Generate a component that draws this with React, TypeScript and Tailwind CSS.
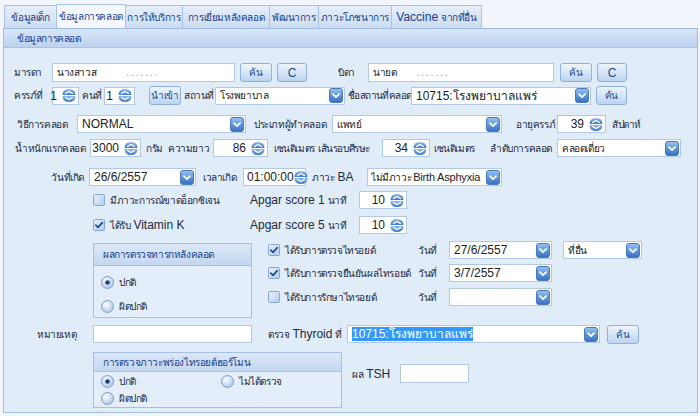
import React from "react";

const FONT = { fontFamily: '"Liberation Sans", "DejaVu Sans", Tahoma, sans-serif' };
const TH = "text-[10px] tracking-[-0.4px]";

function DropIcon() {
  return (
    <svg width="14" height="15" viewBox="0 0 14 15" className="shrink-0">
      <defs>
        <linearGradient id="dg" x1="0" y1="0" x2="0" y2="1">
          <stop offset="0" stopColor="#9cc2f0" />
          <stop offset="0.5" stopColor="#5f97dd" />
          <stop offset="1" stopColor="#356fc0" />
        </linearGradient>
      </defs>
      <rect x="0.5" y="0.5" width="13" height="14" rx="2.5" fill="url(#dg)" stroke="#4a78b8" />
      <path d="M4 6.2 L7 9.2 L10 6.2" fill="none" stroke="#fff" strokeWidth="1.8" strokeLinecap="round" strokeLinejoin="round" />
    </svg>
  );
}

function SpinIcon() {
  return (
    <svg width="14" height="15" viewBox="0 0 14 15" className="shrink-0">
      <defs>
        <linearGradient id="sg" x1="0" y1="0" x2="0" y2="1">
          <stop offset="0" stopColor="#8fb9ec" />
          <stop offset="1" stopColor="#3d78c8" />
        </linearGradient>
      </defs>
      <path d="M0.5 7 Q0.5 1 7 1 Q13.5 1 13.5 7 Z" fill="url(#sg)" />
      <path d="M0.5 8 Q0.5 14 7 14 Q13.5 14 13.5 8 Z" fill="url(#sg)" />
      <path d="M3.5 5.5 L7 3.5 L10.5 5.5" fill="none" stroke="#fff" strokeWidth="1.4" strokeLinecap="round" />
      <path d="M3.5 9.5 L7 11.5 L10.5 9.5" fill="none" stroke="#fff" strokeWidth="1.4" strokeLinecap="round" />
    </svg>
  );
}

function Check({ on }: { on?: boolean }) {
  return (
    <svg width="12" height="12" viewBox="0 0 12 12" className="shrink-0">
      <defs>
        <linearGradient id="cg" x1="0" y1="0" x2="1" y2="1">
          <stop offset="0" stopColor="#eaf2fc" />
          <stop offset="1" stopColor="#b2cbea" />
        </linearGradient>
      </defs>
      <rect x="0.5" y="0.5" width="11" height="11" rx="1" fill="url(#cg)" stroke="#86a7d4" />
      {on && <path d="M2.8 6.2 L5 8.4 L9.3 3.6" fill="none" stroke="#1d4c96" strokeWidth="1.7" strokeLinecap="round" strokeLinejoin="round" />}
    </svg>
  );
}

function Radio({ on }: { on?: boolean }) {
  return (
    <svg width="13" height="13" viewBox="0 0 13 13" className="shrink-0">
      <defs>
        <radialGradient id="rg" cx="0.4" cy="0.35" r="0.7">
          <stop offset="0" stopColor="#ffffff" />
          <stop offset="1" stopColor="#a9c4e8" />
        </radialGradient>
      </defs>
      <circle cx="6.5" cy="6.5" r="6" fill="url(#rg)" stroke="#7d9fcc" />
      {on && <circle cx="6.5" cy="6.5" r="2.3" fill="#1c3f86" />}
    </svg>
  );
}

function Input({ w, h = "h-[19px]", children }: { w: string; h?: string; children?: React.ReactNode }) {
  return (
    <div className={`${w} ${h} shrink-0 bg-white border border-[#b3c8e4] flex items-center px-[4px] ${TH} text-[#222] overflow-hidden whitespace-nowrap`}>
      {children}
    </div>
  );
}

function Combo({ w, text, big, sel }: { w: string; text?: string; big?: boolean; sel?: boolean }) {
  return (
    <div className={`${w} h-[18px] shrink-0 bg-white border border-[#b3c8e4] flex items-center pl-[4px] pr-[1px] overflow-hidden whitespace-nowrap`}>
      <span className={`flex-1 overflow-hidden ${big ? "text-[12px]" : TH} text-[#222]`}>
        {sel ? <span className="bg-[#3399ff] text-white">{text}</span> : text}
      </span>
      <DropIcon />
    </div>
  );
}

function Spin({ w, text }: { w: string; text: string }) {
  return (
    <div className={`${w} h-[18px] shrink-0 bg-white border border-[#b3c8e4] flex items-center justify-end pr-[2px] gap-[5px] whitespace-nowrap`}>
      <span className="text-[12px] text-[#222]">{text}</span>
      <SpinIcon />
    </div>
  );
}

function Btn({ w, text, h = "h-[19px]" }: { w: string; text: string; h?: string }) {
  return (
    <div className={`${w} ${h} shrink-0 rounded-[3px] border border-[#8fb0dc] bg-gradient-to-b from-[#eef4fc] via-[#d6e5f7] to-[#bcd3f0] flex items-center justify-center whitespace-nowrap ${text === "C" ? "text-[12px]" : TH} text-[#1e4d8c]`}>
      {text}
    </div>
  );
}

function Lbl({ w, children, right, cls = "" }: { w: string; children: React.ReactNode; right?: boolean; cls?: string }) {
  return (
    <span className={`${w} shrink-0 whitespace-nowrap ${TH} text-[#1e2a40] ${right ? "text-right pr-[5px]" : ""} ${cls}`}>
      {children}
    </span>
  );
}

function Txt({ children }: { children: React.ReactNode }) {
  return <span className={`${TH} text-[#1e2a40] whitespace-nowrap`}>{children}</span>;
}

const L = ({ children, m = "ml-[3px]" }: { children: React.ReactNode; m?: string }) => (
  <span className={`text-[12px] tracking-normal ${m}`}>{children}</span>
);

const tabs = ["ข้อมูลเด็ก", "ข้อมูลการคลอด", "การให้บริการ", "การเยี่ยมหลังคลอด", "พัฒนาการ", "ภาวะโภชนาการ", "Vaccine จากที่อื่น"];
const tabW = ["w-[53px]", "w-[70px]", "w-[58px]", "w-[88px]", "w-[50px]", "w-[74px]", "w-[91px]"];

export default function App() {
  return (
    <div style={FONT} className="w-[700px] h-[416px] bg-[#f2f6fc] overflow-hidden">
      {/* tabs */}
      <div className="flex pl-[4px] pt-[4px] h-[28px] items-end">
        {tabs.map((t, i) => (
          <div
            key={t}
            className={`${tabW[i]} shrink-0 flex items-center justify-center ${TH} text-[#15428b] border border-b-0 border-[#a7c2e5] -ml-px first:ml-0 whitespace-nowrap ${
              i === 1 ? "h-[24px] bg-[#f3f7fd] relative z-10" : "h-[23px] bg-gradient-to-b from-[#e6eefa] to-[#ccdcf1]"
            }`}
          >
            {i === 6 ? (
              <>
                <L m="mr-[3px]">Vaccine</L>จากที่อื่น
              </>
            ) : (
              t
            )}
          </div>
        ))}
      </div>
      {/* panel */}
      <div className="ml-[3px] w-[695px] h-[385px] border border-[#9fbde3] flex flex-col">
        <div className={`h-[19px] shrink-0 bg-gradient-to-b from-[#d8e6f7] to-[#bcd2ee] border-b border-[#a7c2e5] flex items-center pl-[13px] ${TH} text-[#15428b]`}>
          ข้อมูลการคลอด
        </div>
        <div className="flex-1 bg-[#e1ecf9] pt-[15px]">
          {/* row 1 */}
          <div className="flex items-center h-[19px]">
            <Lbl w="w-[38px] ml-[10px]">มารดา</Lbl>
            <Input w="w-[183px]">นางสาวส <span className="ml-[30px] text-[#999]">. . . . . . .</span></Input>
            <div className="ml-[5px]"><Btn w="w-[32px]" text="ค้น" /></div>
            <div className="ml-[5px]"><Btn w="w-[30px]" text="C" /></div>
            <Lbl w="w-[30px] ml-[31px]">บิดา</Lbl>
            <Input w="w-[186px]">นายต <span className="ml-[20px] text-[#999]">. . . . . . .</span></Input>
            <div className="ml-[6px]"><Btn w="w-[32px]" text="ค้น" /></div>
            <div className="ml-[5px]"><Btn w="w-[30px]" text="C" /></div>
          </div>
          {/* row 2 */}
          <div className="flex items-center h-[19px] mt-[4px]">
            <Lbl w="w-[38px] ml-[10px]">ครรภ์ที่</Lbl>
            <Spin w="w-[27px]" text="1" />
            <Lbl w="w-[25px]" cls="pl-[3px]">คนที่</Lbl>
            <Spin w="w-[31px]" text="1" />
            <div className="ml-[14px]"><Btn w="w-[32px]" text="นำเข้า" /></div>
            <Lbl w="w-[31px] ml-[3px]">สถานที่</Lbl>
            <Combo w="w-[130px]" text="โรงพยาบาล" />
            <Lbl w="w-[63px] ml-[3px]" cls="tracking-[-0.6px]">ชื่อสถานที่คลอด</Lbl>
            <Combo w="w-[180px]" text="10715:โรงพยาบาลแพร่" big />
            <div className="ml-[5px]"><Btn w="w-[31px]" text="ค้น" /></div>
          </div>
          {/* row 3 */}
          <div className="flex items-center h-[18px] mt-[10px]">
            <Lbl w="w-[60px] ml-[13px]">วิธีการคลอด</Lbl>
            <Combo w="w-[169px]" text="NORMAL" big />
            <Lbl w="w-[78px] ml-[8px]">ประเภทผู้ทำคลอด</Lbl>
            <Combo w="w-[170px]" text="แพทย์" />
            <Lbl w="w-[41px] ml-[14px]">อายุครรภ์</Lbl>
            <Spin w="w-[49px]" text="39" />
            <Lbl w="w-[40px] ml-[6px]">สัปดาห์</Lbl>
          </div>
          {/* row 4 */}
          <div className="flex items-center h-[18px] mt-[6px]">
            <Lbl w="w-[75px] ml-[11px]">น้ำหนักแรกคลอด</Lbl>
            <Spin w="w-[51px]" text="3000" />
            <Lbl w="w-[22px] ml-[5px]">กรัม</Lbl>
            <Lbl w="w-[45px]">ความยาว</Lbl>
            <Spin w="w-[55px]" text="86" />
            <Lbl w="w-[44px] ml-[6px]">เซนติเมตร</Lbl>
            <Lbl w="w-[64px]">เส้นรอบศีรษะ</Lbl>
            <Spin w="w-[48px]" text="34" />
            <Lbl w="w-[56px] ml-[4px]">เซนติเมตร</Lbl>
            <Lbl w="w-[67px]">ลำดับการคลอด</Lbl>
            <Combo w="w-[124px]" text="คลอดเดี่ยว" />
          </div>
          {/* row 5 */}
          <div className="flex items-center h-[18px] mt-[11px]">
            <Lbl w="w-[45px] ml-[40px]" right>วันที่เกิด</Lbl>
            <Combo w="w-[107px]" text="26/6/2557" big />
            <Lbl w="w-[40px] ml-[7px]">เวลาเกิด</Lbl>
            <div className="w-[63px] h-[18px] shrink-0 bg-white border border-[#b3c8e4] flex items-center justify-between pl-[3px] pr-[2px] whitespace-nowrap">
              <span className="text-[12px] text-[#222]">01:00:00</span>
              <SpinIcon />
            </div>
            <Lbl w="w-[55px] ml-[6px]">ภาวะ<L>BA</L></Lbl>
            <div className="w-[135px] h-[18px] shrink-0 bg-white border border-[#b3c8e4] flex items-center pl-[3px] pr-[1px] overflow-hidden whitespace-nowrap">
              <span className={`flex-1 overflow-hidden ${TH} text-[#222]`}>ไม่มีภาวะ<span className="ml-[2px] text-[11px] tracking-[-0.2px]">Birth Asphyxia</span></span>
              <DropIcon />
            </div>
          </div>
          {/* row 6 */}
          <div className="flex items-center h-[18px] mt-[5px]">
            <div className="w-[157px] ml-[89px] flex items-center gap-[5px] shrink-0">
              <Check />
              <Txt>มีภาวะการณ์ขาดอ็อกซิเจน</Txt>
            </div>
            <Lbl w="w-[109px]"><L m="mr-[3px]">Apgar score 1</L>นาที</Lbl>
            <Spin w="w-[48px]" text="10" />
          </div>
          {/* row 7 */}
          <div className="flex items-center h-[18px] mt-[7px]">
            <div className="w-[157px] ml-[89px] flex items-center gap-[5px] shrink-0">
              <Check on />
              <Txt>ได้รับ<L>Vitamin K</L></Txt>
            </div>
            <Lbl w="w-[109px]"><L m="mr-[3px]">Apgar score 5</L>นาที</Lbl>
            <Spin w="w-[48px]" text="10" />
          </div>
          {/* section thyroid */}
          <div className="flex mt-[7px] h-[77px]">
            <div className="ml-[89px] mt-[2px] w-[159px] h-[75px] shrink-0 border border-[#a6c1e4] bg-[#e3eefa] flex flex-col">
              <div className={`h-[22px] bg-gradient-to-b from-[#dce8f8] to-[#c3d7f0] border-b border-[#a6c1e4] flex items-center pl-[9px] ${TH} text-[#15428b]`}>
                ผลการตรวจทารกหลังคลอด
              </div>
              <div className="flex items-center gap-[5px] pl-[7px] mt-[9px] h-[14px]">
                <Radio on />
                <Txt>ปกติ</Txt>
              </div>
              <div className="flex items-center gap-[5px] pl-[7px] mt-[10px] h-[14px]">
                <Radio />
                <Txt>ผิดปกติ</Txt>
              </div>
            </div>
            <div className="ml-[16px] flex flex-col">
              <div className="flex items-center h-[18px]">
                <div className="w-[150px] flex items-center gap-[5px] shrink-0">
                  <Check on />
                  <Txt>ได้รับการตรวจไทรอยด์</Txt>
                </div>
                <Lbl w="w-[31px]">วันที่</Lbl>
                <Combo w="w-[103px]" text="27/6/2557" big />
                <div className="ml-[11px]"><Combo w="w-[79px]" text="ที่อื่น" /></div>
              </div>
              <div className="flex items-center h-[18px] mt-[5px]">
                <div className="w-[150px] flex items-center gap-[5px] shrink-0">
                  <Check on />
                  <Txt>ได้รับการตรวจยืนยันผลไทรอยด์</Txt>
                </div>
                <Lbl w="w-[31px]">วันที่</Lbl>
                <Combo w="w-[103px]" text="3/7/2557" big />
              </div>
              <div className="flex items-center h-[18px] mt-[6px]">
                <div className="w-[150px] flex items-center gap-[5px] shrink-0">
                  <Check />
                  <Txt>ได้รับการรักษาไทรอยด์</Txt>
                </div>
                <Lbl w="w-[31px]">วันที่</Lbl>
                <Combo w="w-[103px]" text="" />
              </div>
            </div>
          </div>
          {/* remark row */}
          <div className="flex items-center h-[18px] mt-[7px]">
            <Lbl w="w-[56px] ml-[33px]">หมายเหตุ</Lbl>
            <Input w="w-[159px]" h="h-[18px]" />
            <Lbl w="w-[79px] ml-[16px]">ตรวจ<L m="mx-[3px]">Thyroid</L>ที่</Lbl>
            <Combo w="w-[253px]" text="10715:โรงพยาบาลแพร่" big sel />
            <div className="ml-[7px]"><Btn w="w-[32px]" text="ค้น" /></div>
          </div>
          {/* hormone section */}
          <div className="flex mt-[9px]">
            <div className="ml-[89px] w-[249px] h-[56px] shrink-0 border border-[#a6c1e4] bg-[#e3eefa] flex flex-col">
              <div className={`h-[19px] bg-gradient-to-b from-[#dce8f8] to-[#c3d7f0] border-b border-[#a6c1e4] flex items-center pl-[9px] ${TH} text-[#15428b]`}>
                การตรวจภาวะพร่องไทรอยด์ฮอร์โมน
              </div>
              <div className="flex items-center h-[14px] mt-[2px] pl-[7px]">
                <div className="w-[120px] flex items-center gap-[5px]">
                  <Radio on />
                  <Txt>ปกติ</Txt>
                </div>
                <div className="flex items-center gap-[5px]">
                  <Radio />
                  <Txt>ไม่ได้ตรวจ</Txt>
                </div>
              </div>
              <div className="flex items-center gap-[5px] h-[14px] mt-[3px] pl-[7px]">
                <Radio />
                <Txt>ผิดปกติ</Txt>
              </div>
            </div>
            <div className="ml-[10px] mt-[12px] flex items-center h-[19px]">
              <Lbl w="w-[48px]">ผล<L>TSH</L></Lbl>
              <Input w="w-[69px]" />
            </div>
          </div>
        </div>
      </div>
    </div>
  );
}
